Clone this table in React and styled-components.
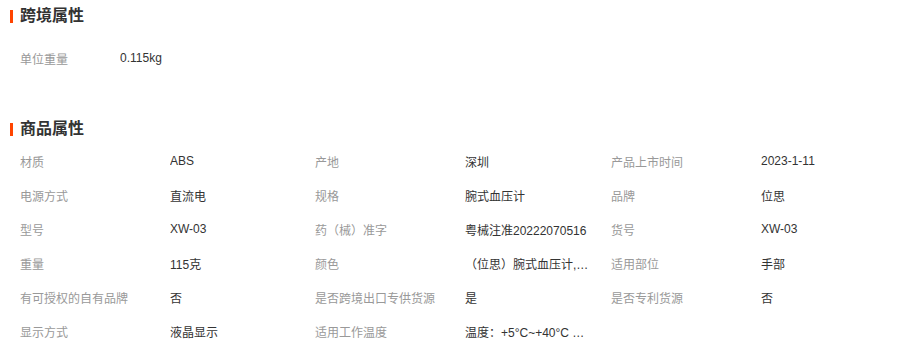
import React from "react";
import styled, { createGlobalStyle } from "styled-components";

const GlobalStyle = createGlobalStyle`
  body {
    margin: 0;
    background: #fff;
    font-family: "Liberation Sans", "Noto Sans CJK SC", sans-serif;
    color: #333;
  }
`;

const crossBorder = [["单位重量", "0.115kg"]];

const goods = [
  ["材质", "ABS", "产地", "深圳", "产品上市时间", "2023-1-11"],
  ["电源方式", "直流电", "规格", "腕式血压计", "品牌", "位思"],
  ["型号", "XW-03", "药（械）准字", "粤械注准20222070516", "货号", "XW-03"],
  ["重量", "115克", "颜色", "（位思）腕式血压计,XW-03", "适用部位", "手部"],
  ["有可授权的自有品牌", "否", "是否跨境出口专供货源", "是", "是否专利货源", "否"],
  ["显示方式", "液晶显示", "适用工作温度", "温度：+5°C~+40°C 湿度：≤85%RH", "", ""],
];

function App() {
  return (
    <Page>
      <GlobalStyle />
      <Section>
        <Title>跨境属性</Title>
        <SimpleList>
          {crossBorder.map(([k, v]) => (
            <SimpleRow key={k}>
              <Label>{k}</Label>
              <Value>{v}</Value>
            </SimpleRow>
          ))}
        </SimpleList>
      </Section>
      <Section $gap>
        <Title>商品属性</Title>
        <Grid>
          {goods.map((row, i) =>
            row.map((cell, j) =>
              j % 2 === 0 ? (
                <Label key={`${i}-${j}`}>{cell}</Label>
              ) : (
                <Value key={`${i}-${j}`} title={cell}>
                  {cell}
                </Value>
              )
            )
          )}
        </Grid>
      </Section>
    </Page>
  );
}

export default App;

const Page = styled.div`
  width: 917px;
  height: 361px;
  overflow: hidden;
  padding-top: 6px;
  box-sizing: border-box;
`;

const Section = styled.section`
  margin-top: ${(p) => (p.$gap ? "51px" : "0")};
`;

const Title = styled.h3`
  position: relative;
  margin: 0;
  padding-left: 20px;
  height: 20px;
  line-height: 20px;
  font-size: 16px;
  font-weight: bold;
  color: #333;

  &::before {
    content: "";
    position: absolute;
    left: 10px;
    top: 4px;
    width: 3px;
    height: 13px;
    background: #ff4400;
  }
`;

const SimpleList = styled.div`
  padding: 22px 0 0 20px;
`;

const SimpleRow = styled.div`
  display: grid;
  grid-template-columns: 100px 1fr;
  height: 20px;
  align-items: center;
`;

const Grid = styled.div`
  display: grid;
  grid-template-columns: 150px 145px 150px 146px 150px 146px;
  grid-auto-rows: 34px;
  align-items: center;
  padding: 5px 0 0 20px;
`;

const Label = styled.div`
  font-size: 12px;
  color: #999;
  white-space: nowrap;
`;

const Value = styled.div`
  font-size: 12px;
  color: #333;
  white-space: nowrap;
  overflow: hidden;
  text-overflow: ellipsis;
  max-width: 124px;
`;
